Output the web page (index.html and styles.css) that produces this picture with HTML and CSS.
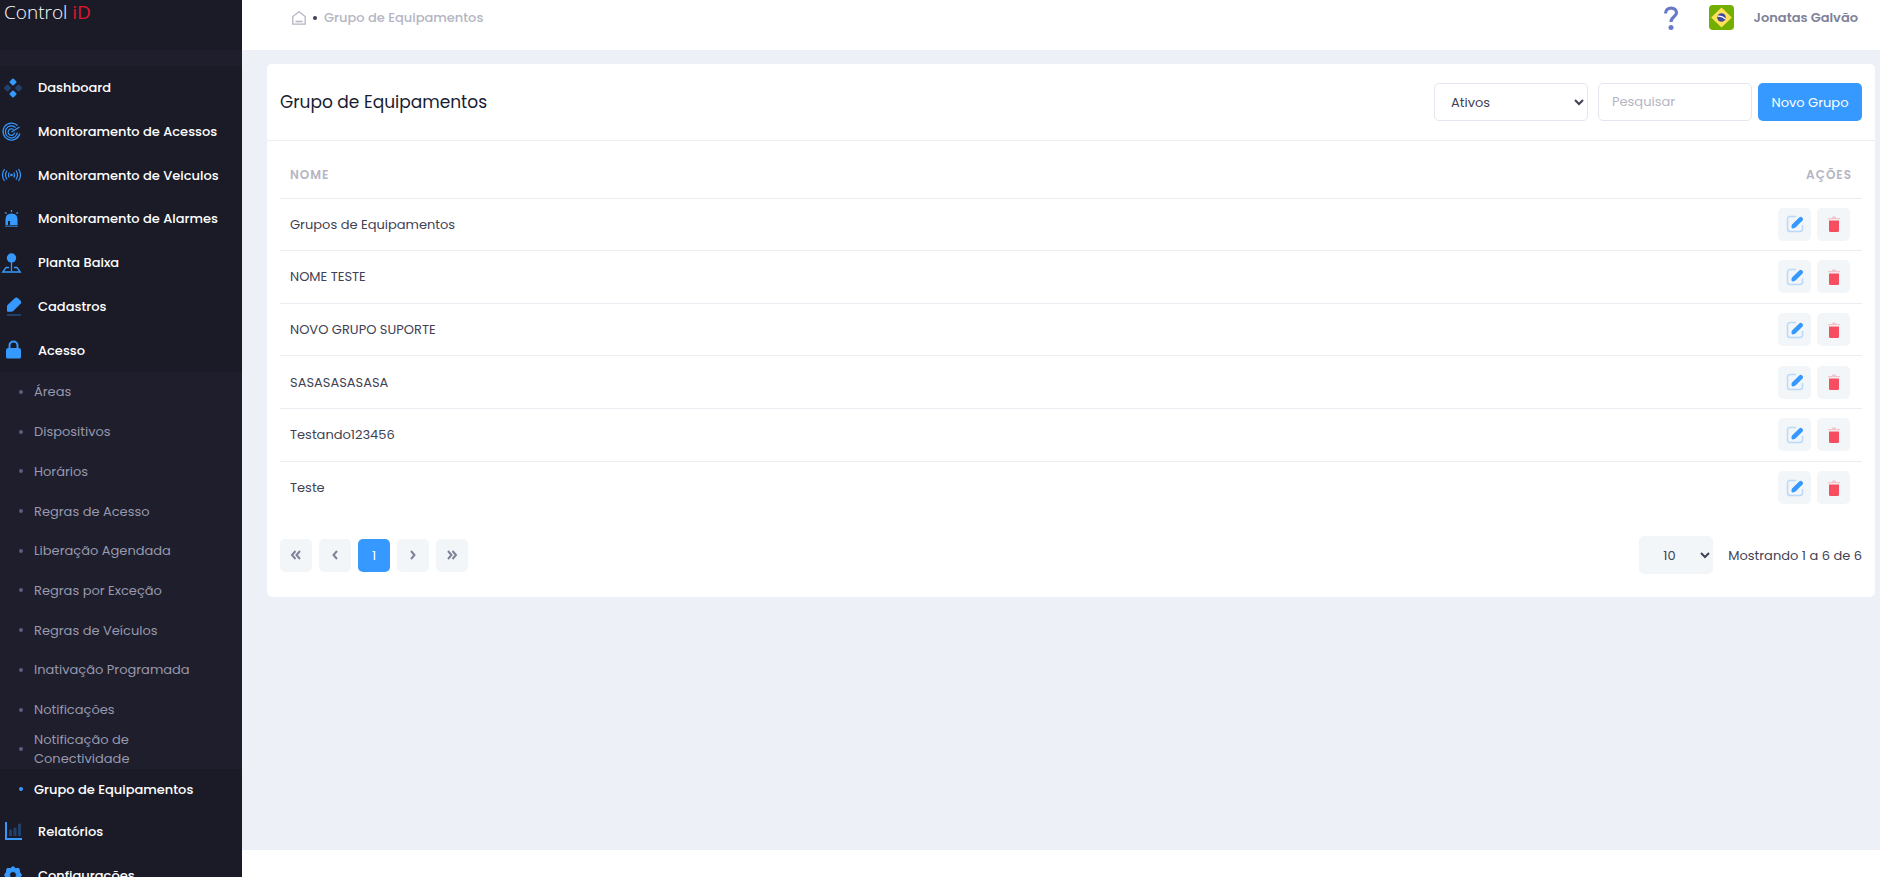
FILE: index.html
```html
<!DOCTYPE html>
<html lang="pt-BR">

<head>
    <meta charset="UTF-8">
    <meta name="viewport" content="width=device-width, initial-scale=1.0">
    <title>Grupo de Equipamentos</title>

    <link rel="stylesheet" href="styles.css">
</head>

<body>
    <!-- icons shared by every table row -->
    <svg class="sprite" aria-hidden="true">
        <symbol id="edit" viewBox="0 0 18 18">
            <path d="M10 1.500H4A2.500 2.500 0 0 0 1.500 4v10A2.500 2.500 0 0 0 4 16.500h10a2.500 2.500 0 0 0 2.500-2.500v-4" fill="none" stroke="#3699ff" stroke-width="1.500" opacity=".3" />
            <path d="M6 9.500 13.500 2.300Q14.800 1.200 16.200 2.500T16.800 5.200L9.500 12.600Q8.500 13.500 6.700 13.400 5.600 13.300 5.500 12.300 5.300 10.500 6 9.500Z" fill="#3699ff" />
        </symbol>
        <symbol id="trash" viewBox="0 0 18 18">
            <path d="M3 3h4v-.5q0-1 1-1h2q1 0 1 1V3h4v1.200H3Z" fill="#f64e60" opacity=".3" />
            <path d="M4 5.500h10v10q0 1.500-1.500 1.500h-7Q4 17 4 15.500Z" fill="#f64e60" />
        </symbol>
    </svg>

    <aside>
        <a class="brand" href="#">Control <span>iD</span></a>
        <nav>
            <ul class="menu menu-top">
                <li><a href="#">
                    <svg viewBox="0 0 24 24"><path d="m13 3.500 2.500 2.500L13 8.500 10.500 6ZM13 15.500l2.500 2.500-2.500 2.500-2.500-2.500Z" stroke-linejoin="round" stroke-width="2" stroke="#3699ff" /><path class="dim" d="M7.500 9.500 10 12l-2.500 2.500L5 12ZM18.500 9.500 21 12l-2.500 2.500L16 12Z" stroke-linejoin="round" stroke-width="2" stroke="#3699ff" /></svg>
                    Dashboard</a></li>
                <li><a href="#">
                    <svg class="line" viewBox="0 0 24 24"><path d="M17.500 5.500A8.500 8.500 0 1 0 19.800 13.500M15.500 7.500a6 6 0 1 0 1.800 5M13.500 9.500a3.300 3.300 0 1 0 1.200 3M11.500 12l8-5" /></svg>
                    Monitoramento de Acessos</a></li>
                <li><a href="#">
                    <svg class="line" viewBox="0 0 24 24"><path d="M4.500 6q-4 6 0 12M7 7.500q-3 4.500 0 9M9.300 9.500q-1.600 2.500 0 5M18.500 6q4 6 0 12M16 7.500q3 4.500 0 9M13.700 9.500q1.600 2.500 0 5" /><circle cx="11.500" cy="12" r=".7" /></svg>
                    Monitoramento de Veiculos</a></li>
                <li><a href="#">
                    <svg viewBox="0 0 24 24"><path d="M5.500 18v-5.500q0-6 6-6t6 6V18h-7.500v-4H8v4Z" /><path d="M5 18.500h13v1.500H5Z" opacity=".6" /><path d="M10.900 3h1.200v2h-1.200ZM4.500 5.500 6 5l1 1.500-1 .5ZM18.500 5.500 17 5l-1 1.500 1 .5Z" /></svg>
                    Monitoramento de Alarmes</a></li>
                <li><a href="#">
                    <svg viewBox="0 0 24 24"><circle cx="11.500" cy="7" r="4.700" /><path d="M11.500 11v9M9 16.500H6L2.700 21h17.600L17 16.500h-3" fill="none" stroke="#3699ff" stroke-width="1.300" /></svg>
                    Planta Baixa</a></li>
                <li><a href="#">
                    <svg viewBox="0 0 24 24"><path d="M7.500 11 15 4q1.500-1 2.800 0l3 3q1 1.200 0 2.500l-7.500 7.500q-.8.800-2 .800H8q-1 0-1-1V13q0-1.200.5-2Z" /><path class="dim" d="M7 20h14v2H7Z" /></svg>
                    Cadastros</a></li>
                <li><a href="#">
                    <svg viewBox="0 0 24 24"><path d="M8.500 10V7.500a5 5 0 0 1 10 0V10q2.500 0 2.500 2v7q0 1.500-1.500 1.500h-12Q6 20.500 6 19v-7q0-2 2.500-2Zm2 0h6V7.500a3 3 0 0 0-6 0Z" /></svg>
                    Acesso</a></li>
            </ul>
            <ul class="submenu">
                <li><a href="#">Áreas</a></li>
                <li><a href="#">Dispositivos</a></li>
                <li><a href="#">Horários</a></li>
                <li><a href="#">Regras de Acesso</a></li>
                <li><a href="#">Liberação Agendada</a></li>
                <li><a href="#">Regras por Exceção</a></li>
                <li><a href="#">Regras de Veículos</a></li>
                <li><a href="#">Inativação Programada</a></li>
                <li><a href="#">Notificações</a></li>
                <li><a href="#">Notificação de<br>Conectividade</a></li>
                <li class="active"><a href="#">Grupo de Equipamentos</a></li>
            </ul>
            <ul class="menu menu-bottom">
                <li><a href="#">
                    <svg viewBox="0 0 24 24"><path d="M5 3h2v16h15v2H5Z" /><path class="dim" d="M9 11q1.500-1 3 0v6H9ZM13.500 9q1.500-1 3 0v8h-3ZM18 5q1.500-1 3 0v12h-3Z" /></svg>
                    Relatórios</a></li>
                <li><a href="#">
                    <svg viewBox="0 0 24 24"><path fill-rule="evenodd" d="m13 3.500 2.500 2H19l.5 3.500L21.500 12l-2 3-.5 3.500h-3.500l-2.500 2-2.500-2H7L6.500 15l-2-3 2-3L7 5.500h3.500ZM13 8.500a3.500 3.500 0 1 0 0 7 3.500 3.500 0 0 0 0-7Z" stroke="#3699ff" stroke-linejoin="round" /></svg>
                    Configurações</a></li>
            </ul>
        </nav>
    </aside>

    <div class="page">
        <header>
            <div class="breadcrumb">
                <a href="#" aria-label="Início">
                    <svg width="14" height="14" viewBox="0 0 14 14"><path d="M.8 13.200V5.500L7 .8l6.200 4.700v7.700ZM3.500 10.500h7" fill="none" stroke="#b5b5c3" stroke-width="1.300" /></svg>
                </a>
                <span class="dot"></span>
                <a href="#">Grupo de Equipamentos</a>
            </div>
            <div class="topbar">
                <a href="#" aria-label="Ajuda">
                    <svg width="16" height="24" viewBox="0 0 16 24"><path d="M2.500 7.500C2.500 4 5 2.200 8.200 2.200s5.300 1.900 5.300 4.600c0 4.200-5.500 4-5.500 9.200" fill="none" stroke="#6a79c7" stroke-width="3.200" /><circle cx="8" cy="21.500" r="2.500" fill="#6a79c7" /></svg>
                </a>
                <button class="flag" type="button" aria-label="Português">
                    <svg width="25" height="25" viewBox="0 0 25 25"><rect width="25" height="25" rx="4" fill="#73af00" /><path d="M12.500 2.500 22.800 12.500 12.500 22.500 2.200 12.500Z" fill="#ffe15a" /><circle cx="12.500" cy="12.500" r="4.300" fill="#41479b" /><path d="M8.500 11.300q4.500-.8 8 2.700" fill="none" stroke="#fff" stroke-width="1.200" /></svg>
                </button>
                <a class="user" href="#">Jonatas Galvão</a>
            </div>
        </header>

        <main>
            <section class="card">
                <div class="card-header">
                    <h1>Grupo de Equipamentos</h1>
                    <div class="toolbar">
                        <select class="status" aria-label="Situação">
                            <option>Ativos</option>
                            <option>Inativos</option>
                        </select>
                        <input type="text" placeholder="Pesquisar" aria-label="Pesquisar">
                        <button class="primary" type="button">Novo Grupo</button>
                    </div>
                </div>
                <div class="card-body">
                    <table>
                        <thead>
                            <tr>
                                <th>NOME</th>
                                <th class="actions">AÇÕES</th>
                            </tr>
                        </thead>
                        <tbody id="groups"></tbody>
                    </table>
                    <div class="table-footer">
                        <div class="pagination">
                            <button type="button" aria-label="Primeira"><svg viewBox="0 0 12 12"><path d="M5.500 2 2 6l3.500 4M10 2 6.500 6l3.500 4" /></svg></button>
                            <button type="button" aria-label="Anterior"><svg viewBox="0 0 12 12"><path d="M8 2 4.500 6 8 10" /></svg></button>
                            <button class="current" type="button">1</button>
                            <button type="button" aria-label="Próxima"><svg viewBox="0 0 12 12"><path d="M4 2l3.500 4L4 10" /></svg></button>
                            <button type="button" aria-label="Última"><svg viewBox="0 0 12 12"><path d="M2 2l3.500 4L2 10M6.500 2l3.500 4-3.500 4" /></svg></button>
                        </div>
                        <div class="page-size">
                            <select aria-label="Itens por página">
                                <option>10</option>
                                <option>20</option>
                                <option>50</option>
                            </select>
                            <span>Mostrando 1 a 6 de 6</span>
                        </div>
                    </div>
                </div>
            </section>
        </main>
        <footer></footer>
    </div>

    <script>
        const groups = ["Grupos de Equipamentos", "NOME TESTE", "NOVO GRUPO SUPORTE",
            "SASASASASASA", "Testando123456", "Teste"];

        function buildButton(icon, label) {
            return `<button type="button" aria-label="${label}"><svg><use href="#${icon}"/></svg></button>`;
        }

        document.querySelector("#groups").innerHTML = groups.map(name => `
            <tr>
                <td>${name}</td>
                <td class="actions"><div>${buildButton("edit", "Editar")}${buildButton("trash", "Excluir")}</div></td>
            </tr>`).join("");
    </script>
</body>

</html>
```
FILE: styles.css
```css
* {
    box-sizing: border-box;
    margin: 0;
    padding: 0;
}

body {
    height: 100vh;
    display: flex;
    overflow: hidden;
    font-family: Poppins, Inter, sans-serif;
    font-size: 13px;
    line-height: 19px;
    color: #3f4254;
}

a {
    color: inherit;
    text-decoration: none;
}

ul {
    list-style: none;
}

button,
input,
select {
    font: inherit;
    color: inherit;
    border: 0;
    border-radius: 5px;
}

button {
    cursor: pointer;
}

.sprite {
    position: absolute;
    width: 0;
    height: 0;
}

/* sidebar */

aside {
    flex: 0 0 242px;
    overflow: hidden;
    background: #1e1e2d;
    color: white;
}

.brand {
    display: block;
    height: 50px;
    padding-left: 4px;
    background: #1b1b28;
    font-family: "Open Sans", sans-serif;
    font-size: 19px;
    font-weight: 300;
    line-height: 24px;
}

.brand span {
    color: #e0142c;
    font-weight: 400;
}

nav {
    padding-top: 16px;
}

.menu,
.submenu {
    display: grid;
    grid-auto-rows: 1fr;
}

.menu {
    background: #1b1b28;
    font-weight: 500;
}

.menu-top {
    min-height: 306px;
}

.menu-bottom {
    min-height: 88px;
}

.menu a {
    display: flex;
    align-items: center;
    gap: 14px;
    height: 100%;
}

.menu svg {
    width: 24px;
    height: 24px;
    fill: #3699ff;
}

.menu svg.line {
    fill: none;
    stroke: #3699ff;
    stroke-width: 1.2;
}

.menu svg .dim {
    opacity: 0.3;
}

.submenu {
    min-height: 437px;
    color: #9899ac;
}

.submenu a {
    display: flex;
    align-items: center;
    gap: 11px;
    height: 100%;
    padding-left: 19px;
}

.submenu a::before {
    content: "";
    width: 4px;
    height: 4px;
    border-radius: 50%;
    background: #5c5e81;
}

.submenu .active {
    background: #1b1b28;
    color: white;
    font-weight: 500;
}

.submenu .active a::before {
    background: #3699ff;
}

/* page */

.page {
    flex: 1;
    display: flex;
    flex-direction: column;
}

header {
    height: 50px;
    padding: 5px 22px 0 50px;
    display: flex;
    align-items: flex-start;
    justify-content: space-between;
}

.breadcrumb,
.topbar {
    display: flex;
    align-items: center;
    height: 25px;
}

.breadcrumb {
    gap: 7px;
    color: #b5b5c3;
    font-weight: 500;
}

.breadcrumb svg,
.topbar svg {
    display: block;
}

.dot {
    width: 4px;
    height: 4px;
    border-radius: 50%;
    background: #3f4254;
}

.topbar {
    gap: 30px;
}

.flag {
    background: none;
}

.user {
    margin-left: -10px;
    color: #7e8299;
    font-weight: 600;
}

main {
    flex: 1;
    padding: 14px 5px 14px 25px;
    background: #eef0f8;
}

footer {
    height: 27px;
}

.card {
    background: white;
    border-radius: 5px;
}

.card-header {
    display: flex;
    align-items: center;
    justify-content: space-between;
    height: 77px;
    padding: 0 13px;
    border-bottom: 1px solid #ebedf3;
}

h1 {
    font-size: 17px;
    font-weight: 400;
    color: #181c32;
}

.toolbar {
    display: flex;
}

.toolbar select,
.toolbar input {
    width: 154px;
    height: 38px;
    margin-right: 10px;
    padding: 0 13px;
    border: 1px solid #e4e6ef;
    background: white;
}

.toolbar input {
    margin-right: 6px;
}

.toolbar select {
    padding: 0 0 0 12px;
}

input::placeholder {
    color: #b5b5c3;
}

.primary {
    width: 104px;
    height: 38px;
    background: #3699ff;
    color: white;
}

.card-body {
    padding: 10px 13px 23px;
}

table {
    width: 100%;
    height: 363px;
    border-collapse: collapse;
}

th {
    height: 47px;
    padding: 0 10px;
    color: #b5b5c3;
    font-size: 12px;
    font-weight: 600;
    letter-spacing: 1px;
    text-align: left;
}

td {
    height: 52px;
    padding: 0 10px;
    border-top: 1px solid #ebedf3;
}

th.actions {
    text-align: right;
}

td.actions div {
    display: flex;
    justify-content: flex-end;
    gap: 6px;
    margin-right: 2px;
}

td button,
.pagination button {
    width: 33px;
    height: 33px;
    display: grid;
    place-items: center;
    background: #f3f6f9;
}

td button svg {
    width: 18px;
    height: 18px;
}

.table-footer,
.pagination,
.page-size {
    display: flex;
    align-items: center;
}

.table-footer {
    justify-content: space-between;
    margin-top: 22px;
}

.pagination {
    gap: 7px;
}

.pagination button {
    width: 32px;
}

.pagination svg {
    width: 12px;
    height: 12px;
    fill: none;
    stroke: #7e8299;
    stroke-width: 2;
}

.pagination .current {
    background: #3699ff;
    color: white;
}

.page-size {
    gap: 15px;
}

.page-size select {
    width: 74px;
    height: 38px;
    padding-left: 20px;
    background: #f3f6f9;
}
```
